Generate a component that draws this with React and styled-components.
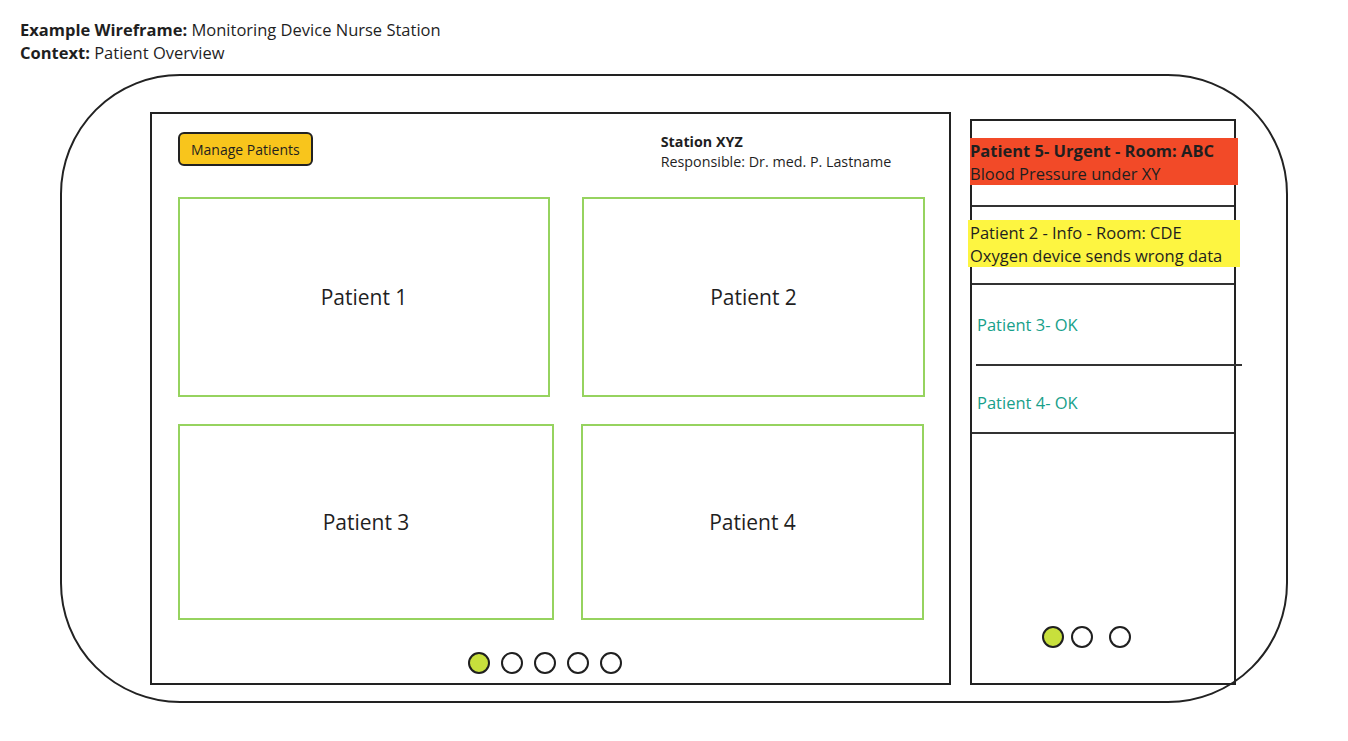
import React from "react";
import styled, { createGlobalStyle } from "styled-components";

const GlobalStyle = createGlobalStyle`
  body {
    margin: 0;
    background: #ffffff;
    font-family: "Open Sans", "Noto Sans", sans-serif;
    color: #1f1f1f;
  }
`;

const Page = styled.div`
  width: 1348px;
  height: 741px;
  padding: 18px 0 0 20px;
  box-sizing: border-box;
`;

const Caption = styled.div`
  font-size: 16.5px;
  line-height: 23px;
  b {
    font-weight: 700;
  }
`;

const Shell = styled.div`
  margin: 10px 0 0 40px;
  width: 1228px;
  height: 629px;
  box-sizing: border-box;
  border: 2px solid #222;
  border-radius: 120px;
  display: flex;
  align-items: flex-start;
  padding: 36px 0 0 88px;
`;

const MainPanel = styled.section`
  width: 801px;
  height: 573px;
  box-sizing: border-box;
  border: 2px solid #222;
  padding: 18px 0 0 26px;
  display: flex;
  flex-direction: column;
`;

const TopRow = styled.div`
  display: flex;
  align-items: flex-start;
  height: 65px;
`;

const ManageButton = styled.button`
  font-family: inherit;
  font-size: 14px;
  color: #1f1f1f;
  background: #f8c51c;
  border: 2px solid #222;
  border-radius: 6px;
  height: 34px;
  padding: 0 11px;
  cursor: pointer;
`;

const Station = styled.div`
  margin: 0 0 0 348px;
  font-size: 14.3px;
  line-height: 20px;
  strong {
    font-weight: 700;
  }
`;

const CardGrid = styled.div`
  display: grid;
  grid-template-columns: 376px 344px;
  grid-template-rows: 200px 196px;
  column-gap: 28px;
  row-gap: 27px;
`;

const Card = styled.div`
  width: ${(p) => p.$w}px;
  margin-left: ${(p) => p.$shift || 0}px;
  box-sizing: border-box;
  border: 2px solid #96d35f;
  display: flex;
  align-items: center;
  justify-content: center;
  font-size: 21px;
`;

const DotRow = styled.div`
  display: flex;
  gap: ${(p) => p.$gap}px;
  justify-content: center;
  padding-right: ${(p) => p.$offset || 0}px;
  margin-top: ${(p) => p.$top}px;
`;

const Dot = styled.span`
  width: 22px;
  height: 22px;
  box-sizing: border-box;
  border: 2px solid #1f1f1f;
  border-radius: 50%;
  background: ${(p) => (p.$active ? "#c8e03c" : "#fff")};
  margin-left: ${(p) => p.$extra || 0}px;
`;

const SidePanel = styled.aside`
  margin: 7px 0 0 19px;
  width: 266px;
  height: 566px;
  box-sizing: border-box;
  border: 2px solid #222;
  display: flex;
  flex-direction: column;
  padding-top: 17px;
`;

const Alert = styled.div`
  margin: ${(p) => p.$top || 0}px ${(p) => p.$right}px 0 ${(p) => p.$left}px;
  background: ${(p) => p.$bg};
  font-size: 16.5px;
  line-height: 23px;
  padding: 1px 0 0 ${(p) => p.$pad}px;
  height: 47px;
  box-sizing: border-box;
  white-space: nowrap;
  strong {
    font-weight: 700;
  }
`;

const Divider = styled.div`
  height: 0;
  border-top: 2px solid #333;
  margin: ${(p) => p.$top}px ${(p) => p.$right || 0}px 0 ${(p) => p.$left || 0}px;
`;

const OkRow = styled.div`
  height: ${(p) => p.$h}px;
  display: flex;
  align-items: center;
  padding: ${(p) => p.$shift || 0}px 0 0 5px;
  box-sizing: border-box;
  color: #17a08a;
  font-size: 16.5px;
`;

const Spacer = styled.div`
  flex: 1;
`;

const BottomGap = styled.div`
  height: 35px;
`;

const patients = [
  { name: "Patient 1", w: 372 },
  { name: "Patient 2", w: 343 },
  { name: "Patient 3", w: 376 },
  { name: "Patient 4", w: 343, shift: -1 },
];

export default function App() {
  return (
    <Page>
      <GlobalStyle />
      <Caption>
        <b>Example Wireframe:</b> Monitoring Device Nurse Station
      </Caption>
      <Caption>
        <b>Context:</b> Patient Overview
      </Caption>
      <Shell>
        <MainPanel>
          <TopRow>
            <ManageButton>Manage Patients</ManageButton>
            <Station>
              <strong>Station XYZ</strong>
              <div>Responsible: Dr. med. P. Lastname</div>
            </Station>
          </TopRow>
          <CardGrid>
            {patients.map((p) => (
              <Card key={p.name} $w={p.w} $shift={p.shift}>
                {p.name}
              </Card>
            ))}
          </CardGrid>
          <DotRow $gap={11} $top={32} $offset={38}>
            {[0, 1, 2, 3, 4].map((i) => (
              <Dot key={i} $active={i === 0} />
            ))}
          </DotRow>
        </MainPanel>
        <SidePanel>
          <Alert $bg="#f24a28" $left={-2} $right={-4} $pad={0}>
            <strong>Patient 5- Urgent - Room: ABC</strong>
            <div>Blood Pressure under XY</div>
          </Alert>
          <Divider $top={20} />
          <Alert $bg="#fdf541" $top={13} $left={-4} $right={-6} $pad={2}>
            <div>Patient 2 - Info - Room: CDE</div>
            <div>Oxygen device sends wrong data</div>
          </Alert>
          <Divider $top={16} />
          <OkRow $h={79}>Patient 3- OK</OkRow>
          <Divider $top={0} $left={4} $right={-8} />
          <OkRow $h={66} $shift={6}>Patient 4- OK</OkRow>
          <Divider $top={0} />
          <Spacer />
          <DotRow $gap={7} $top={0} $offset={34}>
            <Dot $active />
            <Dot />
            <Dot $extra={9} />
          </DotRow>
          <BottomGap />
        </SidePanel>
      </Shell>
    </Page>
  );
}
